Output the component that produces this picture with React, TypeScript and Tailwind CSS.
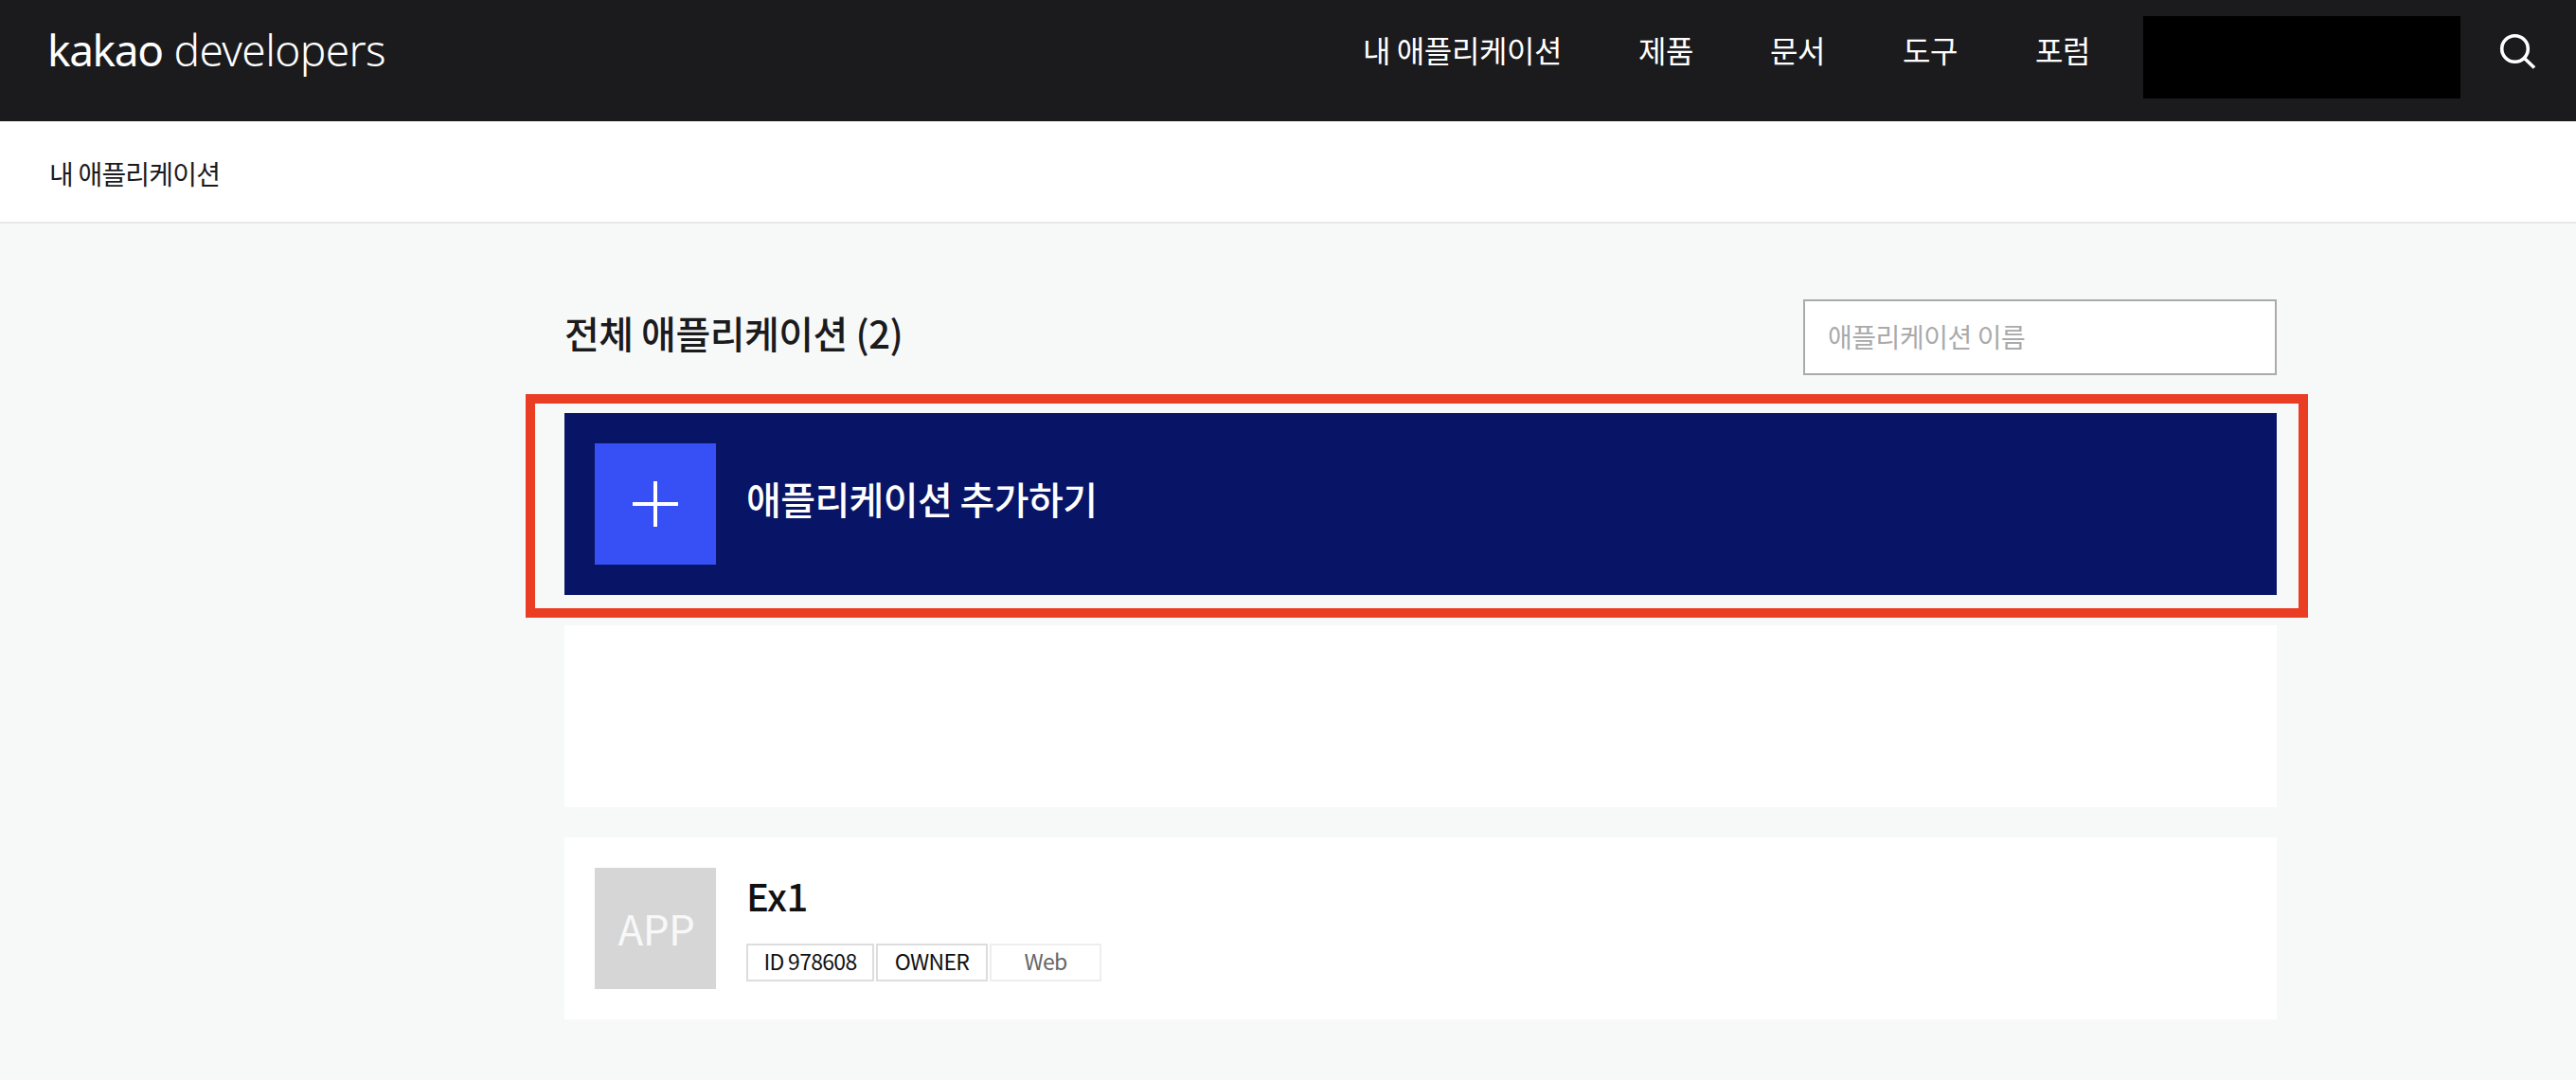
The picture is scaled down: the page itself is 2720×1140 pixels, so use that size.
const kr = "font-['Noto_Sans_CJK_KR','Noto_Sans',sans-serif]";

function Badge({ children, muted, w }: { children: React.ReactNode; muted?: boolean; w: string }) {
  return (
    <span className={`flex h-10 items-center justify-center border-2 pb-[3px] text-[23px] leading-none tracking-[-0.7px] ${w} ${muted ? "border-[#eeeeee] text-[#666666]" : "border-[#dddddd] text-[#111111]"}`}>
      {children}
    </span>
  );
}

export default function App() {
  return (
    <div className={`${kr} h-[1140px] overflow-hidden bg-[#f7f8f8]`}>
      <header className="flex h-[128px] items-center bg-[#1b1b1d] pb-[7px] pl-[50px] text-white">
        <div className="mb-[18px] flex-1 text-[46px] leading-none font-['Noto_Sans','Noto_Sans_CJK_KR',sans-serif]">
          <span className="font-normal tracking-[-1.4px]">kakao</span> <span className="font-light tracking-[-0.6px]">developers</span>
        </div>
        <nav className="mb-[17px] flex items-center text-[32px] leading-none tracking-[-0.4px]">
          <span className="w-[291px]">내 애플리케이션</span>
          <span className="w-[139px]">제품</span>
          <span className="w-[140px]">문서</span>
          <span className="w-[140px]">도구</span>
          <span className="w-[114px]">포럼</span>
        </nav>
        <div className="h-[87px] w-[335px] bg-black" />
        <svg className="mb-[13px] ml-[41px] mr-[43px] h-[38px] w-[38px]" viewBox="0 0 38 38" fill="none" stroke="white" strokeWidth="3.6">
          <circle cx="16.5" cy="16.5" r="13.8" />
          <path d="M26.5 26.5 L37 36.5" />
        </svg>
      </header>
      <div className="flex h-[108px] items-center border-b-2 border-[#e8e8e8] bg-white pl-[52px] pt-[3px] text-[28px] leading-none tracking-[-0.8px] text-[#1b1b1d]">
        내 애플리케이션
      </div>
      <main className="ml-[596px] w-[1808px]">
        <div className="flex items-center justify-between pb-[40px] pt-[80px]">
          <h1 className="mb-[10px] text-[40px] font-medium leading-none tracking-[-0.5px] text-[#1b1b1d]">전체 애플리케이션 (2)</h1>
          <div className="flex h-[80px] w-[500px] items-center border-2 border-[#aaaaaa] bg-white pb-[2px] pl-[24px] text-[28px] tracking-[-0.45px] text-[#aaaaaa]">
            애플리케이션 이름
          </div>
        </div>
        <div className="relative flex h-[192px] items-center gap-[32px] bg-[#081566] pl-[32px] text-white">
          <div className="flex h-[128px] w-[128px] items-center justify-center bg-[#3650f5]">
            <svg className="h-12 w-12" viewBox="0 0 48 48" stroke="white" strokeWidth="4">
              <path d="M24 0V48M0 24H48" />
            </svg>
          </div>
          <span className="mb-[12px] text-[40px] font-medium leading-none tracking-[-0.6px]">애플리케이션 추가하기</span>
          <div className="absolute -bottom-[24px] -left-[41px] -right-[33px] -top-[20px] border-[10px] border-[#ea3e24]" />
        </div>
        <div className="mt-[32px] h-[192px] bg-white" />
        <div className="mt-[32px] flex h-[192px] gap-[32px] bg-white pl-[32px] pt-[32px]">
          <div className="flex h-[128px] w-[128px] items-center justify-center bg-[#d6d6d6] pb-[2px] pl-[2px] text-[44px] leading-none tracking-[-0.5px] text-[#f8f8f8]">APP</div>
          <div className="flex flex-col gap-[31px] pt-[9px]">
            <div className="text-[40px] font-medium leading-none tracking-[-0.5px] text-[#111111]">Ex1</div>
            <div className="flex gap-[2px]">
              <Badge w="w-[135px]">ID 978608</Badge>
              <Badge w="w-[118px]">OWNER</Badge>
              <Badge w="w-[118px]" muted>Web</Badge>
            </div>
          </div>
        </div>
      </main>
    </div>
  );
}
